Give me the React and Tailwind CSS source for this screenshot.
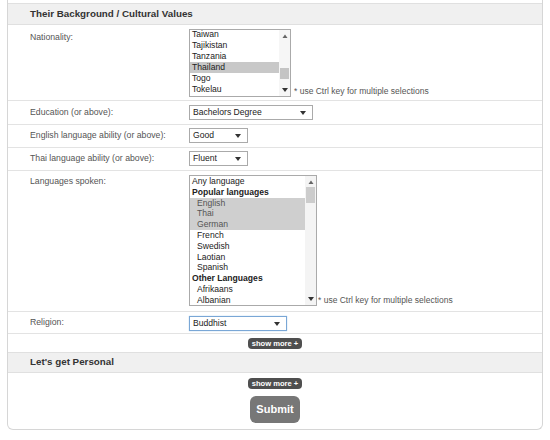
import React from "react";

const font = { fontFamily: '"Liberation Sans", Arial, sans-serif' };

function Arrow({ up }) {
  return (
    <svg width="6" height="4" viewBox="0 0 6 4" className="block shrink-0">
      {up ? <path d="M0.5 4 L3 0.5 L5.5 4 Z" fill="#666" /> : <path d="M0 0 L6 0 L3 4 Z" fill="#333" />}
    </svg>
  );
}

function Select({ w, text, focus }) {
  return (
    <div
      className={`h-[15px] border bg-white flex items-center justify-between pl-[3px] pr-[6px] text-[8.6px] leading-none text-[#222] ${focus ? "border-[#7aa7d6] shadow-[0_0_1px_#9cc2e8]" : "border-[#aaa]"} ${w}`}
    >
      <span>{text}</span>
      <Arrow />
    </div>
  );
}

function Row({ label, children, h, pt = "pt-[5px]" }) {
  return (
    <div className={`flex border-b border-[#e3e3e3] ${h}`}>
      <div className={`w-[181px] shrink-0 whitespace-nowrap pl-[22px] ${pt} text-[8.7px] leading-[12px] text-[#555]`}>{label}</div>
      <div className="pt-[4px]">{children}</div>
    </div>
  );
}

function ShowMore() {
  return (
    <div className="flex justify-center">
      <div className="bg-[#4f4f4f] text-white font-bold text-[7.6px] leading-[10px] h-[11px] w-[54px] rounded-[4px] flex items-center justify-center">
        show more +
      </div>
    </div>
  );
}

export default function App() {
  const nat = ["Taiwan", "Tajikistan", "Tanzania", "Thailand", "Togo", "Tokelau"];
  const langs = [
    ["Any language", 0, 0],
    ["Popular languages", 1, 0],
    ["English", 2, 1],
    ["Thai", 2, 1],
    ["German", 2, 1],
    ["French", 2, 0],
    ["Swedish", 2, 0],
    ["Laotian", 2, 0],
    ["Spanish", 2, 0],
    ["Other Languages", 1, 0],
    ["Afrikaans", 2, 0],
    ["Albanian", 2, 0],
  ];
  return (
    <div className="w-[550px] h-[440px] bg-white" style={font}>
      <div className="ml-[7px] w-[536px] border-x border-b border-[#d6d6d6] rounded-b-[6px] pt-[3px]">
        <div className="h-[22px] bg-[#f0f0f0] border-y border-[#e0e0e0] pl-[22px] flex items-center text-[9.8px] font-bold text-[#333]">
          Their Background / Cultural Values
        </div>
        <Row label="Nationality:" h="h-[76px]" pt="pt-[6px]">
          <div className="flex items-end">
            <div className="w-[102px] h-[68px] border border-[#aaa] bg-white flex overflow-hidden">
              <div className="flex-1 -mt-[1px] text-[8.6px] leading-[11px] text-[#222]">
                {nat.map((n) => (
                  <div key={n} className={`pl-[2px] ${n === "Thailand" ? "bg-[#c8c8c8]" : ""}`}>{n}</div>
                ))}
              </div>
              <div className="w-[11px] bg-[#f6f6f6] flex flex-col items-center py-[4px]">
                <Arrow up />
                <div className="w-[9px] h-[11px] bg-[#c4c4c4] mt-[30px]" />
                <div className="flex-1" />
                <Arrow />
              </div>
            </div>
            <div className="text-[8.5px] leading-[10px] text-[#555] ml-[3px] mb-[1px]">* use Ctrl key for multiple selections</div>
          </div>
        </Row>
        <Row label="Education (or above):" h="h-[24px]">
          <Select w="w-[124px]" text="Bachelors Degree" />
        </Row>
        <Row label="English language ability (or above):" h="h-[23px]" pt="pt-[4px]">
          <div className="-mt-[1px]"><Select w="w-[59px]" text="Good" /></div>
        </Row>
        <Row label="Thai language ability (or above):" h="h-[23px]" pt="pt-[4px]">
          <div className="-mt-[1px]"><Select w="w-[59px]" text="Fluent" /></div>
        </Row>
        <Row label="Languages spoken:" h="h-[141px]" pt="pt-[4px]">
          <div className="flex items-end">
            <div className="w-[128px] h-[131px] border border-[#aaa] bg-white flex overflow-hidden">
              <div className="flex-1 text-[8.6px] leading-[10.8px] text-[#222]">
                {langs.map(([t, k, sel]) => (
                  <div
                    key={t}
                    className={`${k === 2 ? "pl-[7px]" : "pl-[2px]"} ${k === 1 ? "font-bold" : ""} ${sel ? "bg-[#cfcfcf] text-[#555]" : ""}`}
                  >
                    {t}
                  </div>
                ))}
              </div>
              <div className="w-[11px] bg-[#f4f4f4] flex flex-col items-center py-[4px]">
                <Arrow up />
                <div className="w-[9px] h-[16px] bg-[#cccccc] mt-[3px]" />
                <div className="flex-1" />
                <Arrow />
              </div>
            </div>
            <div className="text-[8.5px] leading-[10px] text-[#555] ml-[1px] mb-[1px]">* use Ctrl key for multiple selections</div>
          </div>
        </Row>
        <Row label="Religion:" h="h-[22px]" pt="pt-[4px]">
          <Select w="w-[98px]" text="Buddhist" focus />
        </Row>
        <div className="h-[18px] pt-[4px]">
          <ShowMore />
        </div>
        <div className="h-[21px] bg-[#f0f0f0] border-y border-[#e0e0e0] pl-[22px] flex items-center text-[9.8px] font-bold text-[#333]">
          Let's get Personal
        </div>
        <div className="pt-[5px]">
          <ShowMore />
        </div>
        <div className="flex justify-center pt-[7px] pb-[6px]">
          <div className="w-[50px] h-[27px] bg-[#777] rounded-[6px] text-white font-bold text-[11px] flex items-center justify-center">
            Submit
          </div>
        </div>
      </div>
    </div>
  );
}
